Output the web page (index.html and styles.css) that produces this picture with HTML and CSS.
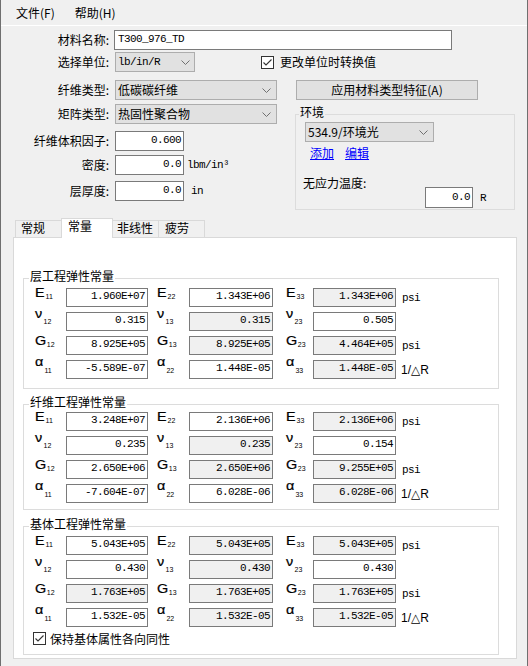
FILE: index.html
```html
<!DOCTYPE html>
<html lang="zh">
<head>
<meta charset="utf-8">
<title>材料</title>
<link rel="stylesheet" href="styles.css">
</head>
<body>
<div class="win">
  <div class="menubar"><span>文件(F)</span><span>帮助(H)</span></div>

  <div class="form">
    <div class="row r1">
      <span class="lbl">材料名称:</span>
      <div class="edit name mono">T300_976_TD</div>
    </div>
    <div class="row r2">
      <span class="lbl">选择单位:</span>
      <div class="combo unit"><span class="mono">lb/in/R</span><svg class="chev" width="9" height="5" viewBox="0 0 9 5"><polyline points="0.5,0.5 4.5,4.5 8.5,0.5" fill="none" stroke="#707070" stroke-width="1"/></svg></div>
      <div class="check conv"><svg class="cb" width="13" height="13" viewBox="0 0 13 13"><rect x="0.5" y="0.5" width="12" height="12" fill="#fff" stroke="#333"/><polyline points="2.5,6.5 5,9 10.5,3.5" fill="none" stroke="#333" stroke-width="1.1"/></svg><span>更改单位时转换值</span></div>
    </div>
    <div class="row r3">
      <span class="lbl">纤维类型:</span>
      <div class="combo wide"><span>低碳碳纤维</span><svg class="chev" width="9" height="5" viewBox="0 0 9 5"><polyline points="0.5,0.5 4.5,4.5 8.5,0.5" fill="none" stroke="#707070" stroke-width="1"/></svg></div>
      <div class="btn">应用材料类型特征(A)</div>
    </div>
    <div class="split">
      <div class="leftcol">
        <div class="row r4">
          <span class="lbl">矩阵类型:</span>
          <div class="combo wide"><span>热固性聚合物</span><svg class="chev" width="9" height="5" viewBox="0 0 9 5"><polyline points="0.5,0.5 4.5,4.5 8.5,0.5" fill="none" stroke="#707070" stroke-width="1"/></svg></div>
        </div>
        <div class="row r5">
          <span class="lbl">纤维体积因子:</span>
          <div class="edit num mono">0.600</div>
        </div>
        <div class="row r6">
          <span class="lbl">密度:</span>
          <div class="edit num mono">0.0</div>
          <span class="u mono u-dens">lbm/in³</span>
        </div>
        <div class="row r7">
          <span class="lbl">层厚度:</span>
          <div class="edit num mono">0.0</div>
          <span class="u mono u-in">in</span>
        </div>
      </div>
      <div class="group env">
        <div class="gt">环境</div>
        <div class="combo envsel"><span>534.9/环境光</span><svg class="chev" width="9" height="5" viewBox="0 0 9 5"><polyline points="0.5,0.5 4.5,4.5 8.5,0.5" fill="none" stroke="#707070" stroke-width="1"/></svg></div>
        <div class="links"><a href="#">添加</a><a href="#">编辑</a></div>
        <div class="tlabel">无应力温度:</div>
        <div class="trow"><div class="edit temp mono">0.0</div><span class="u mono">R</span></div>
      </div>
    </div>
  </div>

  <div class="tabs">
    <div class="tab t1">常规</div>
    <div class="tab t2 on">常量</div>
    <div class="tab t3">非线性</div>
    <div class="tab t4">疲劳</div>
  </div>

  <div class="panel">
    <div class="group g1">
      <div class="gt">层工程弹性常量</div>
      <div class="grid">
        <span class="sym"><span class="m">E</span><sub>11</sub></span><div class="v">1.960E+07</div>
        <span class="sym"><span class="m">E</span><sub>22</sub></span><div class="v">1.343E+06</div>
        <span class="sym"><span class="m">E</span><sub>33</sub></span><div class="v ro">1.343E+06</div>
        <span class="u mono">psi</span>

        <span class="sym gr"><span class="m">ν</span><sub>12</sub></span><div class="v">0.315</div>
        <span class="sym gr"><span class="m">ν</span><sub>13</sub></span><div class="v ro">0.315</div>
        <span class="sym gr"><span class="m">ν</span><sub>23</sub></span><div class="v">0.505</div>
        <span class="u"></span>

        <span class="sym"><span class="m">G</span><sub>12</sub></span><div class="v">8.925E+05</div>
        <span class="sym"><span class="m">G</span><sub>13</sub></span><div class="v ro">8.925E+05</div>
        <span class="sym"><span class="m">G</span><sub>23</sub></span><div class="v ro">4.464E+05</div>
        <span class="u mono">psi</span>

        <span class="sym gr al"><span class="m">α</span><sub>11</sub></span><div class="v">-5.589E-07</div>
        <span class="sym gr al"><span class="m">α</span><sub>22</sub></span><div class="v">1.448E-05</div>
        <span class="sym gr al"><span class="m">α</span><sub>33</sub></span><div class="v ro">1.448E-05</div>
        <span class="u ur">1/△R</span>
      </div>
    </div>

    <div class="group g2">
      <div class="gt">纤维工程弹性常量</div>
      <div class="grid">
        <span class="sym"><span class="m">E</span><sub>11</sub></span><div class="v">3.248E+07</div>
        <span class="sym"><span class="m">E</span><sub>22</sub></span><div class="v">2.136E+06</div>
        <span class="sym"><span class="m">E</span><sub>33</sub></span><div class="v ro">2.136E+06</div>
        <span class="u mono">psi</span>

        <span class="sym gr"><span class="m">ν</span><sub>12</sub></span><div class="v">0.235</div>
        <span class="sym gr"><span class="m">ν</span><sub>13</sub></span><div class="v ro">0.235</div>
        <span class="sym gr"><span class="m">ν</span><sub>23</sub></span><div class="v">0.154</div>
        <span class="u"></span>

        <span class="sym"><span class="m">G</span><sub>12</sub></span><div class="v">2.650E+06</div>
        <span class="sym"><span class="m">G</span><sub>13</sub></span><div class="v ro">2.650E+06</div>
        <span class="sym"><span class="m">G</span><sub>23</sub></span><div class="v ro">9.255E+05</div>
        <span class="u mono">psi</span>

        <span class="sym gr al"><span class="m">α</span><sub>11</sub></span><div class="v">-7.604E-07</div>
        <span class="sym gr al"><span class="m">α</span><sub>22</sub></span><div class="v">6.028E-06</div>
        <span class="sym gr al"><span class="m">α</span><sub>33</sub></span><div class="v ro">6.028E-06</div>
        <span class="u ur">1/△R</span>
      </div>
    </div>

    <div class="group g3">
      <div class="gt">基体工程弹性常量</div>
      <div class="grid">
        <span class="sym"><span class="m">E</span><sub>11</sub></span><div class="v">5.043E+05</div>
        <span class="sym"><span class="m">E</span><sub>22</sub></span><div class="v ro">5.043E+05</div>
        <span class="sym"><span class="m">E</span><sub>33</sub></span><div class="v ro">5.043E+05</div>
        <span class="u mono">psi</span>

        <span class="sym gr"><span class="m">ν</span><sub>12</sub></span><div class="v">0.430</div>
        <span class="sym gr"><span class="m">ν</span><sub>13</sub></span><div class="v ro">0.430</div>
        <span class="sym gr"><span class="m">ν</span><sub>23</sub></span><div class="v">0.430</div>
        <span class="u"></span>

        <span class="sym"><span class="m">G</span><sub>12</sub></span><div class="v ro">1.763E+05</div>
        <span class="sym"><span class="m">G</span><sub>13</sub></span><div class="v ro">1.763E+05</div>
        <span class="sym"><span class="m">G</span><sub>23</sub></span><div class="v ro">1.763E+05</div>
        <span class="u mono">psi</span>

        <span class="sym gr al"><span class="m">α</span><sub>11</sub></span><div class="v">1.532E-05</div>
        <span class="sym gr al"><span class="m">α</span><sub>22</sub></span><div class="v ro">1.532E-05</div>
        <span class="sym gr al"><span class="m">α</span><sub>33</sub></span><div class="v ro">1.532E-05</div>
        <span class="u ur">1/△R</span>
      </div>
      <div class="check iso"><svg class="cb" width="13" height="13" viewBox="0 0 13 13"><rect x="0.5" y="0.5" width="12" height="12" fill="#fff" stroke="#333"/><polyline points="2.5,6.5 5,9 10.5,3.5" fill="none" stroke="#333" stroke-width="1.1"/></svg><span>保持基体属性各向同性</span></div>
    </div>
  </div>
</div>
</body>
</html>
```

FILE: styles.css
```css
* { box-sizing: border-box; }
html, body { margin: 0; padding: 0; }
body {
  width: 528px;
  height: 666px;
  overflow: hidden;
  background: #f0f0f0;
  font-family: "Noto Sans CJK SC", "Liberation Sans", sans-serif;
  font-size: 12px;
  color: #000;
}
.win {
  width: 528px;
  height: 666px;
  border-left: 1px solid #6f6f6f;
  border-right: 1px solid #6f6f6f;
  background: #f0f0f0;
}
.mono {
  font-family: "Liberation Mono", monospace;
  font-size: 11px;
  letter-spacing: -0.6px;
}

/* menu */
.menubar {
  height: 26px;
  border-bottom: 1px solid #ffffff;
  display: flex;
  align-items: center;
  gap: 20px;
  padding: 1px 0 0 15px;
  line-height: 16px;
}

/* top form */
.form { padding-top: 4px; }
.row { display: flex; align-items: center; height: 20px; }
.r1 { margin-bottom: 2px; }
.r3 { margin-top: 8px; }
.r4 { margin-top: 4px; }
.r5 { margin-top: 7px; }
.r6 { margin-top: 4px; }
.r7 { margin-top: 6px; }
.lbl {
  width: 108px;
  text-align: right;
  line-height: 16px;
  white-space: nowrap;
}
.edit {
  height: 20px;
  border: 1px solid #7a7a7a;
  background: #fff;
  line-height: 17px;
  white-space: nowrap;
}
.edit.name { width: 338px; margin-left: 5px; padding-left: 3px; }
.edit.num { width: 69px; margin-left: 6px; text-align: right; padding-right: 2px; }
.u { white-space: nowrap; }
.u-dens { margin-left: 3px; }
.u-in { margin-left: 7px; }

.combo {
  height: 20px;
  border: 1px solid #adadad;
  background: #e1e1e1;
  display: flex;
  align-items: center;
  justify-content: space-between;
  padding: 0 4px 0 2px;
  line-height: 16px;
  white-space: nowrap;
}
.combo.unit { width: 80px; margin-left: 6px; }
.combo.wide { width: 162px; margin-left: 6px; padding-right: 5px; }
.chev { display: block; flex: none; }

.check { display: flex; align-items: center; line-height: 16px; white-space: nowrap; }
.cb { display: block; flex: none; }
.check.conv { margin-left: 66px; gap: 6px; }

.btn {
  width: 182px;
  height: 20px;
  margin-left: 19px;
  border: 1px solid #adadad;
  background: #e1e1e1;
  text-align: center;
  line-height: 18px;
  white-space: nowrap;
}

.split { display: flex; align-items: flex-start; }
.leftcol { width: 276px; flex: none; }

/* group boxes */
.group { border: 1px solid #dcdcdc; }
.gt {
  width: fit-content;
  margin: -10px 0 0 5px;
  padding: 0 1px;
  line-height: 14px;
  background: #fff;
  white-space: nowrap;
}
.env {
  width: 220px;
  margin: 14px 0 0 18px;
  padding: 0 0 1px 0;
}
.env .gt { background: #f0f0f0; margin-left: 3px; }
.combo.envsel { width: 129px; margin: 3px 0 0 9px; padding-right: 5px; }
.links { display: flex; gap: 11px; margin: 3px 0 0 14px; line-height: 16px; }
.links a { color: #0000ff; text-decoration: underline; }
.tlabel { height: 11px; margin: 15px 0 0 7px; line-height: 14px; white-space: nowrap; }
.trow { display: flex; align-items: center; height: 21px; margin-left: 129px; }
.edit.temp { width: 48px; height: 21px; text-align: right; padding-right: 2px; line-height: 18px; }
.trow .u { margin-left: 7px; }

/* tabs */
.tabs {
  display: flex;
  align-items: flex-end;
  height: 19px;
  margin: 8px 0 0 14px;
}
.tab {
  height: 17px;
  border: 1px solid #d9d9d9;
  border-bottom: none;
  background: #f0f0f0;
  line-height: 14px;
  padding-left: 5px;
  white-space: nowrap;
}
.tab + .tab { margin-left: -1px; }
.t1 { width: 47px; }
.t2 { width: 52px; }
.t3 { width: 47px; padding-left: 4px; }
.t4 { width: 47px; padding-left: 6px; }
.tab.on {
  height: 20px;
  margin-bottom: -1px;
  background: #fff;
  padding-left: 6px;
  z-index: 1;
}

/* panel */
.panel {
  width: 504px;
  height: 422px;
  margin-left: 12px;
  border: 1px solid #d9d9d9;
  background: #fff;
  padding-left: 9px;
}
.panel .group { width: 476px; }
.g1 { margin-top: 40px; padding-bottom: 9px; }
.g2 { margin-top: 15px; padding-bottom: 6px; }
.g3 { margin-top: 16px; padding-bottom: 9px; }
.g1 .grid { margin-top: 5px; }
.g2 .grid { margin-top: 3px; }
.g3 .grid { margin-top: 5px; }

.grid {
  display: grid;
  grid-template-columns: 42px 82px 41px 84px 40px 83px 1fr;
  grid-auto-rows: 19px;
  row-gap: 5px;
}
.v {
  border: 1px solid #7a7a7a;
  background: #fff;
  font-family: "Liberation Mono", monospace;
  font-size: 11px;
  letter-spacing: -0.6px;
  line-height: 15px;
  text-align: right;
  padding-right: 2px;
  white-space: nowrap;
}
.v.ro { background: #f0f0f0; }

.sym { display: flex; align-items: flex-start; font-family: "Liberation Sans", sans-serif; }
.grid > .sym:nth-child(7n+1) { padding-left: 11px; }
.grid > .sym:nth-child(7n+3) { padding-left: 9px; }
.grid > .sym:nth-child(7n+5) { padding-left: 13px; }
.sym .m {
  display: block;
  font-size: 12px;
  line-height: 11px;
  transform: scaleX(1.2);
  transform-origin: left top;
  margin-right: 2.5px;
  -webkit-text-stroke: 0.2px #000;
}
.sym sub {
  display: block;
  font-size: 7px;
  line-height: 7px;
  margin-top: 4.5px;
  vertical-align: baseline;
}
.sym.gr .m { margin-top: -3.5px; }
.sym.gr sub { margin-top: 6px; }
.sym.al sub { margin-top: 6.5px; }

.grid > .u { display: flex; align-items: center; }
.grid > .u.mono { padding-left: 6px; }
.grid > .u.ur {
  padding-left: 5px;
  font-family: "Liberation Sans", "DejaVu Sans", sans-serif;
  font-size: 12px;
}

.check.iso { margin: 5px 0 0 9px; gap: 4px; height: 13px; }
```
